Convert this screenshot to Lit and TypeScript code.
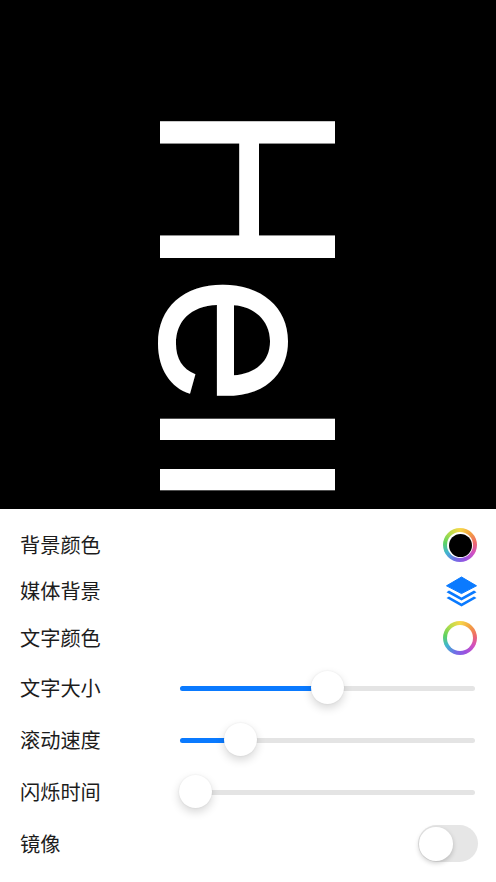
import { LitElement, html, css, svg } from "lit";
import { customElement } from "lit/decorators.js";

const layers = svg`<svg width="31" height="32" viewBox="0 0 31 32" aria-hidden="true">
  <path d="M15.5 1 L30.5 9.8 L15.5 17.6 L0.5 9.8 Z" fill="#0a7aff" stroke="#0a7aff" stroke-width="1" stroke-linejoin="round"/>
  <path d="M3 14.6 L0.5 16.2 L15.5 24.6 L30.5 16.2 L28 14.6 L15.5 21.6 Z" fill="#0a7aff"/>
  <path d="M3 20.4 L0.5 22 L15.5 30.6 L30.5 22 L28 20.4 L15.5 27.6 Z" fill="#0a7aff"/>
</svg>`;

@customElement("app-root")
export class AppRoot extends LitElement {
  static styles = css`
    :host {
      display: block;
      width: 496px;
      height: 882px;
      overflow: hidden;
      background: #fff;
      font-family: "Inter", "Noto Sans CJK SC", sans-serif;
    }
    .stage {
      height: 509px;
      background: #000;
      overflow: hidden;
      display: flex;
      justify-content: center;
    }
    .marquee {
      writing-mode: vertical-rl;
      color: #fff;
      font-size: 241px;
      line-height: 1;
      letter-spacing: -6px;
      white-space: nowrap;
      padding-top: 99.5px;
      height: 400px;
      margin-left: -1px;
    }
    .marquee .e {
      font-size: 230px;
      letter-spacing: -7px;
      vertical-align: -2px;
    }
    .marquee .l {
      letter-spacing: -8px;
    }
    .settings {
      padding: 13px 19px 0 20px;
    }
    .row {
      display: flex;
      align-items: center;
      justify-content: space-between;
      height: 52px;
    }
    .row.short {
      height: 46.5px;
    }
    .label {
      font-family: "Noto Sans CJK SC", sans-serif;
      font-size: 20.2px;
      color: #1c1c1c;
      white-space: nowrap;
    }
    .short .label {
      padding-bottom: 2px;
    }
    .wheel {
      width: 34px;
      height: 34px;
      border-radius: 50%;
      background: conic-gradient(#f6d84a, #f3a23f, #ee6a6a, #d24fc0, #9a52e0, #6f6fe6, #3fb6d0, #5fd35f, #b8dc4a, #f6d84a);
      display: flex;
      align-items: center;
      justify-content: center;
    }
    .wheel .hole {
      width: 26px;
      height: 26px;
      border-radius: 50%;
      background: #fff;
      display: flex;
      align-items: center;
      justify-content: center;
    }
    .wheel .dot {
      width: 23px;
      height: 23px;
      border-radius: 50%;
      background: #000;
    }
    .icon {
      display: flex;
    }
    .slider {
      position: relative;
      width: 295px;
      height: 5px;
      margin: 2px 2px 0 0;
      background: #e4e4e4;
      border-radius: 3px;
    }
    .fill {
      height: 100%;
      background: #0a7aff;
      border-radius: 3px;
    }
    .thumb {
      position: absolute;
      top: 50%;
      width: 33px;
      height: 33px;
      margin: -18px 0 0 -16.5px;
      border-radius: 50%;
      background: #fff;
      box-shadow: 0 4px 10px rgba(0, 0, 0, 0.16), 0 0 2px rgba(0, 0, 0, 0.08);
    }
    .toggle {
      width: 60px;
      height: 37px;
      margin-right: -1px;
      padding: 2px 2px 2px 1px;
      box-sizing: border-box;
      border-radius: 19px;
      background: #e6e6e6;
    }
    .knob {
      width: 33.5px;
      height: 33.5px;
      border-radius: 50%;
      background: #fff;
      box-shadow: 0 2px 5px rgba(0, 0, 0, 0.2);
    }
  `;

  private slider(label: string, thumbX: number) {
    return html`<div class="row">
      <span class="label">${label}</span>
      <div class="slider">
        <div class="fill" style="width:${thumbX}px"></div>
        <div class="thumb" style="left:${thumbX}px"></div>
      </div>
    </div>`;
  }

  render() {
    return html`
      <div class="stage"><div class="marquee">H<span class="e">e</span><span class="l">ll</span></div></div>
      <div class="settings">
        <div class="row short">
          <span class="label">背景颜色</span>
          <div class="wheel"><div class="hole"><div class="dot"></div></div></div>
        </div>
        <div class="row short">
          <span class="label">媒体背景</span>
          <div class="icon">${layers}</div>
        </div>
        <div class="row short">
          <span class="label">文字颜色</span>
          <div class="wheel"><div class="hole"></div></div>
        </div>
        ${this.slider("文字大小", 147)}
        ${this.slider("滚动速度", 60)}
        ${this.slider("闪烁时间", 15)}
        <div class="row">
          <span class="label">镜像</span>
          <div class="toggle"><div class="knob"></div></div>
        </div>
      </div>
    `;
  }
}
